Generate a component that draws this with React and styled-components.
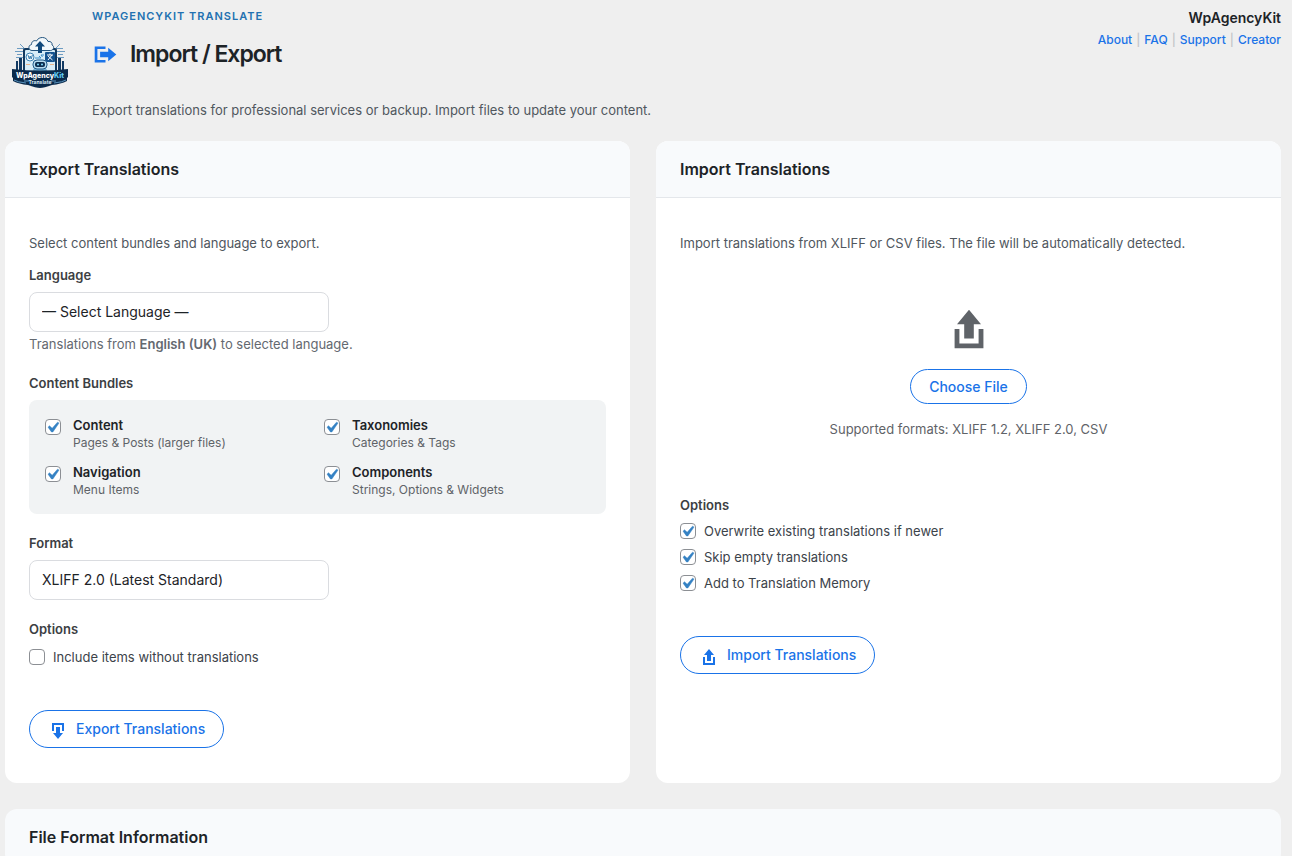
import React from 'react'
import styled, { createGlobalStyle } from 'styled-components'

const uploadPath = 'M8 14V8H5l5-6 5 6h-3v6H8zm-2 2v-6H4v8h12.01v-8H14v6H6z'
const downloadPath = 'M14.01 4v6h2V2H4v8h2.01V4h8zm-2 2v6h3l-5 6-5-6h3V6h4z'
const migratePath = 'M4 6h6V4H2v12.01h8V14H4V6zm2 2h6V5l6 5-6 5v-3H6V8z'

const bundles = [
  { id: 'content', name: 'Content', note: 'Pages & Posts (larger files)' },
  { id: 'taxonomies', name: 'Taxonomies', note: 'Categories & Tags' },
  { id: 'navigation', name: 'Navigation', note: 'Menu Items' },
  { id: 'components', name: 'Components', note: 'Strings, Options & Widgets' },
]

const importOptions = [
  { id: 'overwrite', name: 'Overwrite existing translations if newer' },
  { id: 'skip-empty', name: 'Skip empty translations' },
  { id: 'memory', name: 'Add to Translation Memory' },
]

const Icon = ({ path, size }) => (
  <svg width={size} height={size} viewBox="0 0 20 20" fill="currentColor" aria-hidden="true">
    <path d={path} />
  </svg>
)

const Logo = () => (
  <svg width="64" height="64" viewBox="0 0 64 64" role="img" aria-label="WpAgencyKit Translate">
    {/* circuit lines */}
    <g fill="none" stroke="#6d9cc2" strokeWidth="1">
      <path d="M16 18.500H9M15 21.500H7M14 24.500H9M15 27.500H8M48 18.500h7M49 21.500h8M50 24.500h5M49 27.500h7" />
      <path d="M12 14l4 4M52 14l-4 4" />
    </g>
    <path d="M8 31h2v10H8zM11 28h3v13h-3zM50 28h3v13h-3zM54 31h2v10h-2z" fill="#123a63" />
    {/* screen */}
    <rect x="15" y="18" width="34" height="24" rx="2" fill="#12395f" />
    <rect x="17" y="20" width="30" height="21" rx="1" fill="#d8edf8" />
    {/* cloud */}
    <path
      d="M24 20.500c-3.500 0-4.500-5-.5-6 0-3.500 3-4.500 5-3.500 2.500-5 10-4.500 11.500.5 3-.5 4.500 1.500 4 3.500 3 1.500 1.500 5.500-1.500 5.500z"
      fill="#f2f8fb"
      stroke="#24557f"
      strokeWidth="1"
    />
    <path d="M32 11l5 5.500h-3V23h-4v-6.500h-3z" fill="#114a7c" />
    <circle cx="22" cy="27" r="4" fill="#f4fafd" stroke="#3d82b3" strokeWidth="1" />
    <path d="M20 25l1.300 4 .9-3 1 3 1.200-4" fill="none" stroke="#3d82b3" strokeWidth="1" />
    <rect x="37" y="22" width="10" height="10" rx="1" fill="#155490" />
    <path d="M39 25h6M42 23.500V25M40 30l4-5M40 26l4.500 4" stroke="#fff" strokeWidth="1" fill="none" />
    <path d="M27 28h6l-2-2M36 25h-3l1.500 2" stroke="#3d8fc8" strokeWidth="1" fill="none" />
    <path d="M18 34.500h4M42 34.500h4" stroke="#e9b48a" strokeWidth="1" />
    {/* robot */}
    <path d="M25 41c0-3 3-4 7-4s7 1 7 4z" fill="#77b4da" />
    <rect x="25" y="30" width="14" height="9" rx="4" fill="#b6dcf0" stroke="#215b88" strokeWidth="1" />
    <rect x="27" y="32" width="10" height="5" rx="2" fill="#0c2e50" />
    <circle cx="30" cy="34.500" r="1" fill="#7fdcff" />
    <circle cx="34" cy="34.500" r="1" fill="#7fdcff" />
    {/* ribbon */}
    <path d="M4 39q28 3 56 0v8l-1 1v3q-6 3-15 4-8 3-12 3t-12-3q-9-1-15-4v-3l-1-1z" fill="#0b2b4c" />
    <path d="M6 50q3 2 12 3M58 50q-3 2-12 3M21 51h-5M43 51h5" fill="none" stroke="#5a93bd" strokeWidth="1" />
    <text x="32" y="48" textAnchor="middle" fontFamily="Inter, sans-serif" fontSize="7" fontWeight="800" fill="#fff">
      WpAgency<tspan fill="#62cdf5">Kit</tspan>
    </text>
    <text x="32" y="54" textAnchor="middle" fontFamily="Inter, sans-serif" fontSize="5" fontWeight="700" fill="#dceefa">
      Translate
    </text>
  </svg>
)

const App = () => (
  <>
    <GlobalStyle />
    <Page>
      <Header>
        <Logo />
        <Intro>
          <Eyebrow>WPAGENCYKIT TRANSLATE</Eyebrow>
          <Title>
            <Icon path={migratePath} size={27} />
            Import / Export
          </Title>
          <Lead>Export translations for professional services or backup. Import files to update your content.</Lead>
        </Intro>
        <Brand>
          <strong>WpAgencyKit</strong>
          <nav>
            <a href="#about">About</a>
            <span>|</span>
            <a href="#faq">FAQ</a>
            <span>|</span>
            <a href="#support">Support</a>
            <span>|</span>
            <a href="#creator">Creator</a>
          </nav>
        </Brand>
      </Header>

      <Cards>
        <Card>
          <CardHeader>
            <h2>Export Translations</h2>
          </CardHeader>
          <CardBody>
            <Description>Select content bundles and language to export.</Description>
            <Field>
              <Label htmlFor="language">Language</Label>
              <Select id="language">
                <option>— Select Language —</option>
              </Select>
              <Hint>
                Translations from <strong>English (UK)</strong> to selected language.
              </Hint>
            </Field>
            <Field as="fieldset">
              <Label as="legend">Content Bundles</Label>
              <Bundles>
                {bundles.map(({ id, name, note }) => (
                  <Bundle key={id} htmlFor={id}>
                    <Checkbox id={id} defaultChecked />
                    <span>
                      <strong>{name}</strong>
                      <small>{note}</small>
                    </span>
                  </Bundle>
                ))}
              </Bundles>
            </Field>
            <Field>
              <Label htmlFor="format">Format</Label>
              <Select id="format">
                <option>XLIFF 2.0 (Latest Standard)</option>
              </Select>
            </Field>
            <Options $labelGap={8}>
              <Label as="legend">Options</Label>
              <Option htmlFor="include-empty">
                <Checkbox id="include-empty" />
                Include items without translations
              </Option>
            </Options>
            <ActionButton type="button">
              <Icon path={downloadPath} size={20} />
              Export Translations
            </ActionButton>
          </CardBody>
        </Card>

        <Card>
          <CardHeader>
            <h2>Import Translations</h2>
          </CardHeader>
          <CardBody>
            <Description>
              Import translations from XLIFF or CSV files. The file will be automatically detected.
            </Description>
            <DropZone>
              <Icon path={uploadPath} size={48} />
              <FileButton type="button">Choose File</FileButton>
              <p>Supported formats: XLIFF 1.2, XLIFF 2.0, CSV</p>
            </DropZone>
            <Options $labelGap={6}>
              <Label as="legend">Options</Label>
              {importOptions.map(({ id, name }) => (
                <Option key={id} htmlFor={id}>
                  <Checkbox id={id} defaultChecked />
                  {name}
                </Option>
              ))}
            </Options>
            <ActionButton type="button">
              <Icon path={uploadPath} size={20} />
              Import Translations
            </ActionButton>
          </CardBody>
        </Card>
      </Cards>

      <Card>
        <CardHeader>
          <h2>File Format Information</h2>
        </CardHeader>
      </Card>
    </Page>
  </>
)

const GlobalStyle = createGlobalStyle`
  * {
    box-sizing: border-box;
  }

  html {
    overflow: hidden;
  }

  body {
    margin: 0;
    background: #efefef;
    color: #3c434a;
    font-family: Inter, 'Liberation Sans', sans-serif;
    font-size: 13px;
    line-height: 20px;
  }

  h1, h2, p {
    margin: 0;
  }

  strong {
    font-weight: 600;
  }

  a {
    color: #1a73e8;
    text-decoration: none;
  }
`

const Page = styled.main`
  display: flex;
  flex-direction: column;
  gap: 26px;
  padding: 6px 11px 0 5px;
`

const Header = styled.header`
  display: flex;
  align-items: flex-start;
  margin-bottom: -5px;
  padding-left: 3px;

  > svg {
    flex: none;
    margin-top: 24px;
  }
`

const Intro = styled.div`
  flex: 1;
  margin-left: 20px;
`

const Eyebrow = styled.p`
  color: #2271b1;
  font-size: 11px;
  font-weight: 600;
  letter-spacing: 1px;
`

const Title = styled.h1`
  display: flex;
  align-items: center;
  gap: 11px;
  margin-top: 12px;
  color: #1d2327;
  font-size: 23px;
  font-weight: 600;
  letter-spacing: -1px;
  line-height: 32px;

  svg {
    color: #1a73e8;
  }
`

const Lead = styled.p`
  margin-top: 30px;
  color: #50575e;
`

const Brand = styled.div`
  padding-top: 2px;
  text-align: right;

  strong {
    color: #1d2327;
    font-size: 14px;
  }

  nav {
    display: flex;
    gap: 4px;
    margin-top: 2px;
    color: #c3c4c7;
    font-size: 12px;
    font-weight: 500;
  }
`

const Cards = styled.div`
  display: grid;
  grid-template-columns: 1fr 1fr;
  gap: 26px;
`

const Card = styled.section`
  overflow: hidden;
  border-radius: 12px;
  background: #fff;
`

const CardHeader = styled.header`
  padding: 16px 24px;
  border-bottom: 1px solid #e4e7eb;
  background: #f8fafc;

  h2 {
    color: #1d2327;
    font-size: 16px;
    font-weight: 600;
    line-height: 24px;
  }
`

const CardBody = styled.div`
  padding: 35px 24px;
`

const Description = styled.p`
  margin-bottom: 12px;
  color: #50575e;
`

const Field = styled.div`
  min-width: 0;
  margin: 0 0 19px;
  padding: 0;
  border: 0;
`

const Label = styled.label`
  display: block;
  margin-bottom: 7px;
  padding: 0;
  color: #3c4043;
  font-weight: 600;
`

const Select = styled.select`
  display: block;
  width: 300px;
  height: 40px;
  padding: 0 12px;
  appearance: none;
  border: 1px solid #dadce0;
  border-radius: 8px;
  background: #fff;
  color: #1d2327;
  font: inherit;
  font-size: 14px;
`

const Hint = styled.p`
  margin-top: 2px;
  color: #646970;
`

const Checkbox = styled.input.attrs({ type: 'checkbox' })`
  flex: none;
  width: 16px;
  height: 16px;
  margin: 0;
  appearance: none;
  border: 1px solid #8c8f94;
  border-radius: 4px;
  background: #fff;

  &:checked {
    background: #fff
      url("data:image/svg+xml;utf8,<svg xmlns='http://www.w3.org/2000/svg' viewBox='0 0 20 20'><path d='M14.83 4.89l1.34.94-5.81 8.38H9.02L5.78 9.67l1.34-1.25 2.57 2.4z' fill='%233582c4' stroke='%233582c4' stroke-width='.5'/></svg>")
      no-repeat -4px -3px / 21px 21px;
  }
`

const Bundles = styled.div`
  display: grid;
  grid-template-columns: 1fr 1fr;
  gap: 13px;
  padding: 17px 16px 16px;
  border-radius: 8px;
  background: #f1f3f4;
`

const Bundle = styled.label`
  display: flex;
  gap: 12px;
  line-height: 17px;

  input {
    margin-top: 2px;
  }

  strong,
  small {
    display: block;
  }

  strong {
    color: #1d2327;
  }

  small {
    color: #5f6368;
    font-size: 12px;
  }
`

const Options = styled.fieldset`
  margin: 0 0 43px;
  padding: 0;
  border: 0;

  legend {
    margin-bottom: ${({ $labelGap }) => $labelGap}px;
  }
`

const Option = styled.label`
  display: flex;
  align-items: center;
  gap: 8px;

  & + & {
    margin-top: 6px;
  }
`

const OutlineButton = styled.button`
  border: 1px solid #1a73e8;
  border-radius: 20px;
  background: #fff;
  color: #1a73e8;
  font: inherit;
  font-size: 14px;
  font-weight: 500;
`

const ActionButton = styled(OutlineButton)`
  display: flex;
  align-items: center;
  gap: 8px;
  height: 38px;
  padding: 0 18px;

  svg {
    margin-top: 4px;
  }
`

const FileButton = styled(OutlineButton)`
  height: 35px;
  margin: 16px 0 15px;
  padding: 0 18px;
`

const DropZone = styled.div`
  display: flex;
  flex-direction: column;
  align-items: center;
  padding: 40px 0 56px;
  color: #5f6368;
`

export default App
